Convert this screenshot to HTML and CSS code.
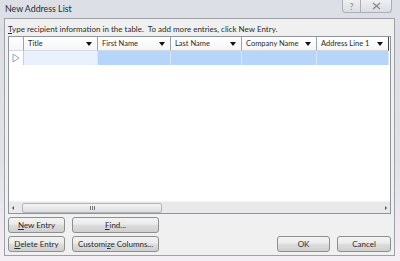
FILE: index.html
```html
<!DOCTYPE html>
<html lang="en">
<head>
    <meta charset="UTF-8">
    <title>New Address List</title>
    <link rel="stylesheet" href="styles.css">
</head>
<body>

<div class="window">
    <!-- Title bar -->
    <div class="titlebar">
        <span class="title">New Address List</span>
        <div class="caption-buttons">
            <div class="cap-btn help">?</div>
            <div class="cap-btn close">
                <svg width="9" height="8" viewBox="0 0 9 8"><path d="M1 1 L8 7 M8 1 L1 7" stroke="#8a8a8a" stroke-width="1.4" fill="none"/></svg>
            </div>
        </div>
    </div>

    <!-- Dialog body -->
    <div class="dialog">
        <p class="hint"><u>T</u>ype recipient information in the table.&nbsp; To add more entries, click New Entry.</p>

        <div class="grid-box">
            <div class="grid-head">
                <div class="cell sel"></div>
                <div class="cell">Title <span class="arrow"></span></div>
                <div class="cell">First Name <span class="arrow"></span></div>
                <div class="cell">Last Name <span class="arrow"></span></div>
                <div class="cell">Company Name <span class="arrow"></span></div>
                <div class="cell">Address Line 1 <span class="arrow"></span></div>
            </div>
            <div class="grid-row">
                <div class="cell sel">
                    <svg width="8" height="10" viewBox="0 0 8 10"><path d="M1 1 L7 5 L1 9 Z" fill="#fff" stroke="#8aa4c8"/></svg>
                </div>
                <div class="cell light"></div>
                <div class="cell blue"></div>
                <div class="cell blue"></div>
                <div class="cell blue"></div>
                <div class="cell blue"></div>
            </div>
            <div class="grid-empty"></div>
            <div class="hscroll">
                <span class="sarrow left"></span>
                <div class="thumb"><span class="grip"></span></div>
                <span class="sarrow right"></span>
            </div>
        </div>

        <div class="actions">
            <div class="btn-cols">
                <div class="btn-row">
                    <button class="btn w1"><u>N</u>ew Entry</button>
                    <button class="btn w2"><u>F</u>ind...</button>
                </div>
                <div class="btn-row">
                    <button class="btn w1"><u>D</u>elete Entry</button>
                    <button class="btn w2">Customi<u>z</u>e Columns...</button>
                </div>
            </div>
            <div class="btn-row end">
                <button class="btn ok">OK</button>
                <button class="btn cancel">Cancel</button>
            </div>
        </div>
    </div>
</div>

</body>
</html>
```

FILE: styles.css
```css
/* Reset */
* {
    margin: 0;
    padding: 0;
    box-sizing: border-box;
}

body {
    width: 400px;
    height: 261px;
    overflow: hidden;
    font-family: Lato, "Liberation Sans", sans-serif;
    font-size: 8px;
    color: #2b2b2b;
    background: linear-gradient(180deg, #dcdfe5 0%, #e3dfe7 60%, #f4eff5 100%);
}

.window {
    height: 100%;
    display: flex;
    flex-direction: column;
    padding: 0 5px 5px 4px;
}

/* Title bar */
.titlebar {
    height: 18px;
    display: flex;
    align-items: flex-start;
    justify-content: space-between;
}

.title {
    padding: 3px 0 0 1px;
    font-size: 8.8px;
    color: #2a2a2a;
}

.caption-buttons {
    display: flex;
    margin-right: 3px;
}

.cap-btn {
    height: 13px;
    border: 1px solid #adaeb5;
    border-top: none;
    background: linear-gradient(180deg, #eeeff2, #dcdde3);
    display: flex;
    align-items: center;
    justify-content: center;
    color: #8a8a8a;
    font-size: 9px;
}

.help {
    width: 19px;
    border-radius: 0 0 0 4px;
}

.close {
    width: 31px;
    border-left: none;
    border-radius: 0 0 4px 0;
}

/* Dialog client area */
.dialog {
    flex: 1;
    background: #f0f0f0;
    border: 1px solid #9ea1a6;
    padding: 3px;
    display: flex;
    flex-direction: column;
}

.hint {
    height: 14px;
    line-height: 14px;
}

/* Grid */
.grid-box {
    height: 178px;
    border: 1px solid #8f949b;
    background: #fff;
    display: flex;
    flex-direction: column;
}

.grid-head,
.grid-row {
    display: grid;
    grid-template-columns: 15px 74px 73px 71px 75px 72px;
}

.grid-head {
    height: 14px;
    background: linear-gradient(180deg, #ffffff, #f4f5f7);
}

.grid-head .cell {
    border-right: 1px solid #9da3ab;
    border-bottom: 1px solid #d5d8dc;
    display: flex;
    align-items: center;
    justify-content: space-between;
    padding: 0 5px 0 4px;
    font-size: 7.5px;
    white-space: nowrap;
}

.grid-head .cell:last-child {
    border-right: 1px solid #444;
}

.arrow {
    width: 0;
    height: 0;
    border-left: 3px solid transparent;
    border-right: 3px solid transparent;
    border-top: 4px solid #111;
}

.grid-row {
    height: 14px;
}

.grid-row .cell {
    border-right: 1px solid #d8e8f8;
}

.grid-row .sel {
    background: #fff;
    border-right: 1px solid #c9ced4;
    display: flex;
    align-items: center;
    justify-content: center;
}

.light {
    background: #e9f2fc;
}

.blue {
    background: #b5d6f8;
}

.grid-empty {
    flex: 1;
}

/* Horizontal scrollbar */
.hscroll {
    height: 12px;
    background: #e9e9eb;
    border-top: 1px solid #f4f4f4;
    display: flex;
    align-items: center;
    padding: 0 3px;
}

.sarrow {
    width: 0;
    height: 0;
    border-top: 2px solid transparent;
    border-bottom: 2px solid transparent;
}

.sarrow.left {
    border-right: 2px solid #555;
    margin-right: 8px;
}

.sarrow.right {
    border-left: 2px solid #555;
    margin-left: auto;
}

.thumb {
    width: 140px;
    height: 10px;
    border: 1px solid #b4b6ba;
    border-radius: 2px;
    background: linear-gradient(180deg, #f4f4f5, #dcdde0);
    display: flex;
    align-items: center;
    justify-content: center;
}

.grip {
    width: 5px;
    height: 4px;
    border-left: 1px solid #777;
    border-right: 1px solid #777;
    position: relative;
}

.grip::after {
    content: "";
    position: absolute;
    left: 1px;
    top: 0;
    width: 1px;
    height: 4px;
    background: #777;
}

/* Buttons */
.actions {
    display: flex;
    justify-content: space-between;
    align-items: flex-end;
    padding-top: 3px;
}

.btn-cols {
    display: flex;
    flex-direction: column;
    gap: 3px;
}

.btn-row {
    display: flex;
    gap: 7px;
}

.btn {
    height: 16px;
    font-family: inherit;
    font-size: 8px;
    color: #2b2b2b;
    border: 1px solid #8e8f8f;
    border-radius: 3px;
    background: linear-gradient(180deg, #f3f3f3 0%, #ebebeb 45%, #dddddd 50%, #cfcfcf 100%);
}

.w1 {
    width: 57px;
}

.w2 {
    width: 87px;
}

.ok {
    width: 53px;
}

.cancel {
    width: 54px;
}
```
